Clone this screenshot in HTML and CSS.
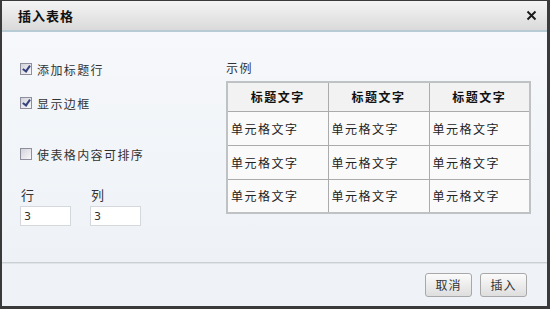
FILE: index.html
```html
<!DOCTYPE html>
<html lang="zh">

<head>
    <meta charset="UTF-8">
    <title>插入表格</title>
    <link rel="stylesheet" href="styles.css">
</head>

<body>
    <div class="dialog">
        <div class="titlebar">
            <span class="title">插入表格</span>
            <span class="close">
                <svg width="11" height="11" viewBox="0 0 11 11">
                    <path d="M1.5 1.5 L9.5 9.5 M9.5 1.5 L1.5 9.5" stroke="#1a1a1a" stroke-width="1.9" />
                </svg>
            </span>
        </div>
        <div class="content">
            <div class="options">
                <label class="check-row">
                    <span class="check checked"></span>添加标题行
                </label>
                <label class="check-row">
                    <span class="check checked"></span>显示边框
                </label>
                <label class="check-row">
                    <span class="check"></span>使表格内容可排序
                </label>
                <div class="size-row">
                    <div class="field">
                        <span class="field-label">行</span>
                        <input class="field-input" type="text" value="3">
                    </div>
                    <div class="field">
                        <span class="field-label">列</span>
                        <input class="field-input" type="text" value="3">
                    </div>
                </div>
            </div>
            <div class="preview">
                <div class="preview-label">示例</div>
                <table class="sample">
                    <tr>
                        <th>标题文字</th>
                        <th>标题文字</th>
                        <th>标题文字</th>
                    </tr>
                    <tr>
                        <td>单元格文字</td>
                        <td>单元格文字</td>
                        <td>单元格文字</td>
                    </tr>
                    <tr>
                        <td>单元格文字</td>
                        <td>单元格文字</td>
                        <td>单元格文字</td>
                    </tr>
                    <tr>
                        <td>单元格文字</td>
                        <td>单元格文字</td>
                        <td>单元格文字</td>
                    </tr>
                </table>
            </div>
        </div>
        <div class="footer">
            <button class="btn">取消</button>
            <button class="btn">插入</button>
        </div>
    </div>
</body>

</html>
```

FILE: styles.css
```css
body {
    margin: 0;
    background: #2e2e2e;
    font-family: "Noto Sans CJK SC", "DejaVu Sans", sans-serif;
    font-size: 12px;
    color: #222;
}

.dialog {
    box-sizing: border-box;
    width: 550px;
    height: 309px;
    border-top: 1px solid #3a3a3a;
    border-left: 2px solid #3a3a3a;
    border-right: 3px solid #3a3a3a;
    border-bottom: 3px solid #3a3a3a;
    background: #eff3f7;
    display: flex;
    flex-direction: column;
}

.titlebar {
    height: 29px;
    flex: none;
    display: flex;
    align-items: center;
    justify-content: space-between;
    padding: 0 10px 0 16px;
    background: linear-gradient(#f4f4f4, #dadada);
    border-bottom: 2px solid #b7cbd4;
}

.title {
    font-size: 13px;
    font-weight: bold;
    letter-spacing: 1px;
    color: #111;
}

.close {
    display: flex;
}

.content {
    flex: 1;
    display: flex;
    background: linear-gradient(#f6f8fb, #eef2f6);
}

.options {
    width: 204px;
    padding: 30px 0 0 18px;
    display: flex;
    flex-direction: column;
}

.check-row {
    display: flex;
    align-items: center;
    gap: 5px;
    height: 14px;
    margin-bottom: 20px;
    letter-spacing: 1.4px;
    color: #333;
}

.check-row:nth-child(3) {
    margin-top: 17px;
    margin-bottom: 0;
}

.check {
    box-sizing: border-box;
    width: 12px;
    height: 12px;
    border: 1px solid #8e8e9c;
    background: linear-gradient(135deg, #d2d2da, #f8f8fa);
    position: relative;
}

.check.checked::after {
    content: "";
    position: absolute;
    left: 3px;
    top: 0;
    width: 3px;
    height: 6px;
    border: solid #36427c;
    border-width: 0 2px 2px 0;
    transform: rotate(35deg);
}

.size-row {
    display: flex;
    gap: 19px;
    margin-top: 26px;
}

.field {
    display: flex;
    flex-direction: column;
}

.field-label {
    font-size: 13px;
    line-height: 16px;
    margin-left: 1px;
    color: #333;
}

.field-input {
    box-sizing: border-box;
    width: 51px;
    height: 20px;
    margin-top: 3px;
    border: 1px solid #d4d8dc;
    background: #fff;
    padding: 0 3px;
    font-family: "DejaVu Sans", sans-serif;
    font-size: 11px;
    color: #333;
}

.preview {
    padding: 27px 0 0 2px;
}

.preview-label {
    letter-spacing: 1.4px;
    color: #333;
    height: 16px;
    margin-bottom: 6px;
}

.sample {
    border-collapse: collapse;
    border: 2px solid #bfc2c4;
}

.sample th,
.sample td {
    border: 1px solid #a9abad;
    width: 101px;
    box-sizing: border-box;
    letter-spacing: 1.5px;
}

.sample th {
    height: 29px;
    background: #f2f2f2;
    font-weight: bold;
    text-align: center;
    color: #111;
}

.sample td {
    height: 34px;
    background: #fafafa;
    padding: 0 3px;
    color: #222;
}

.footer {
    height: 43px;
    flex: none;
    display: flex;
    justify-content: flex-end;
    align-items: center;
    gap: 8px;
    padding: 0 20px 0 0;
    border-top: 1px solid #c9cfd4;
    box-shadow: inset 0 1px 0 #dfe4e8;
}

.btn {
    width: 47px;
    height: 24px;
    border: 1px solid #a8a8a8;
    border-radius: 3px;
    background: linear-gradient(#fbfbfb, #dedede);
    font-family: "Noto Sans CJK SC", sans-serif;
    font-size: 12px;
    letter-spacing: 1px;
    color: #333;
    padding: 0;
}
```
